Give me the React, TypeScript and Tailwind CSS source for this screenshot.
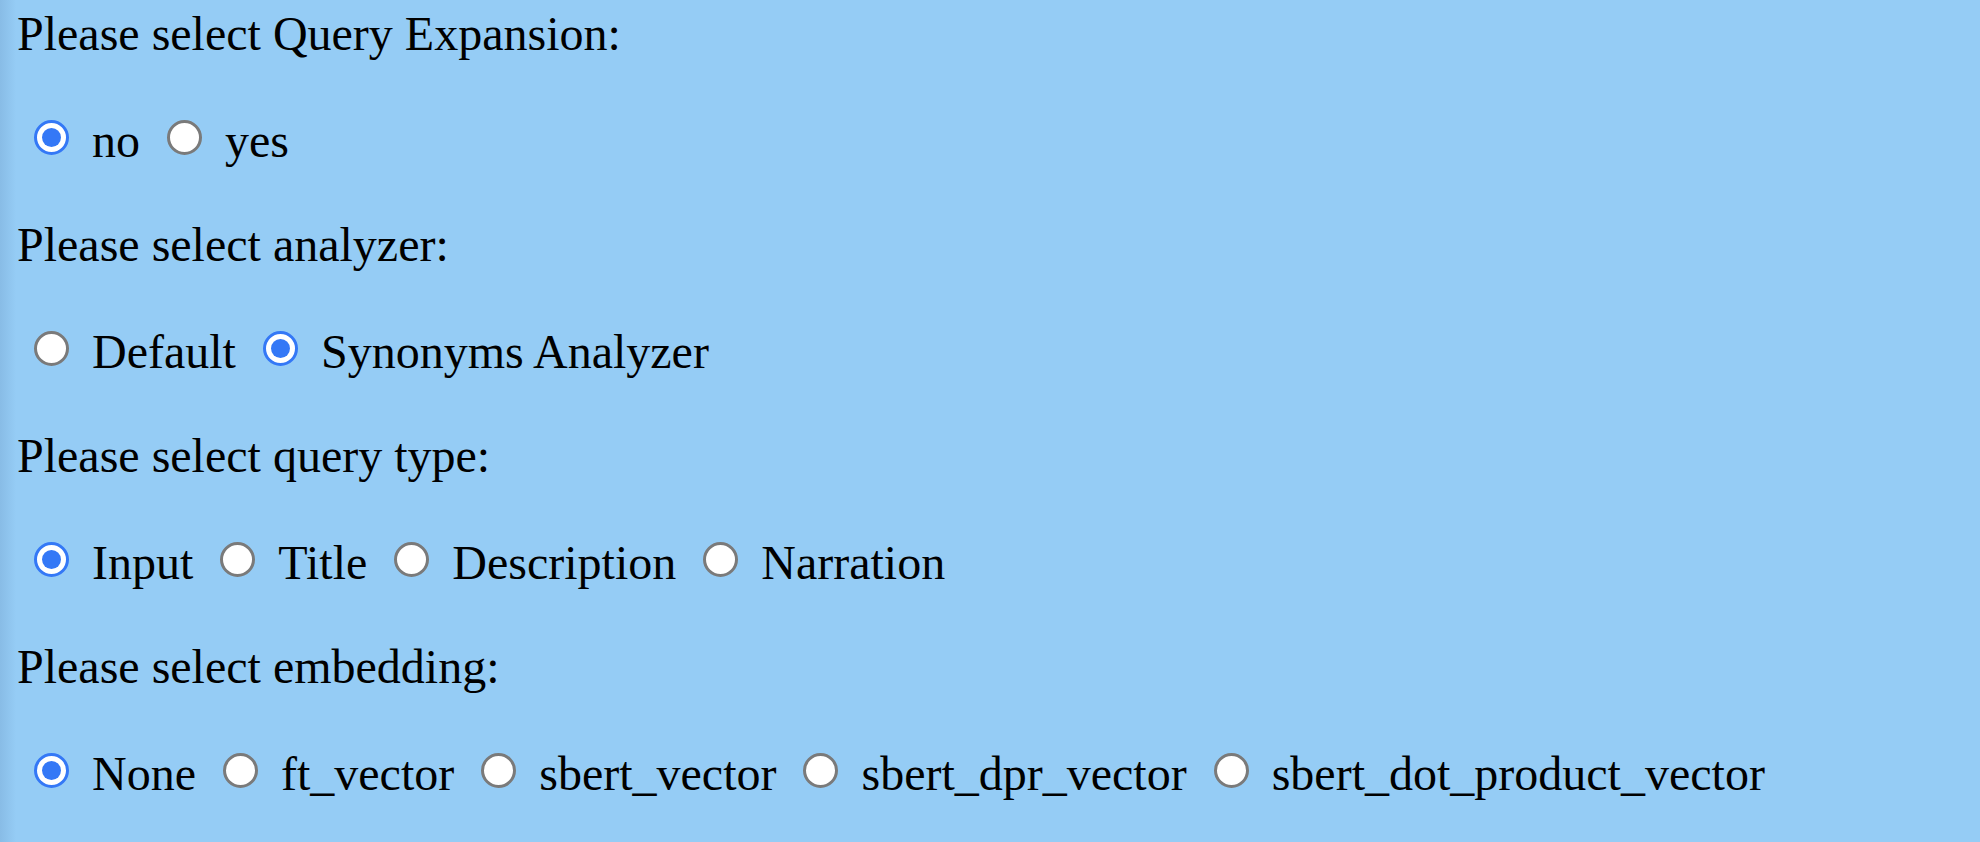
import React from "react";

type Opt = { label: string; checked?: boolean };

const sections: { title: string; options: Opt[] }[] = [
  { title: "Please select Query Expansion:", options: [{ label: "no", checked: true }, { label: "yes" }] },
  { title: "Please select analyzer:", options: [{ label: "Default" }, { label: "Synonyms Analyzer", checked: true }] },
  {
    title: "Please select query type:",
    options: [{ label: "Input", checked: true }, { label: "Title" }, { label: "Description" }, { label: "Narration" }],
  },
  {
    title: "Please select embedding:",
    options: [
      { label: "None", checked: true },
      { label: "ft_vector" },
      { label: "sbert_vector" },
      { label: "sbert_dpr_vector" },
      { label: "sbert_dot_product_vector" },
    ],
  },
];

function Radio({ checked, first }: { checked?: boolean; first: boolean }) {
  return (
    <span
      className={
        "mt-[7px] mr-[23px] flex h-[35px] w-[35px] shrink-0 items-center justify-center rounded-full border-[3px] bg-white " +
        (first ? "ml-[17px] " : "ml-[27px] ") +
        (checked ? "border-[#3478f6]" : "border-[#7a7a7a]")
      }
    >
      {checked && <span className="h-[19px] w-[19px] rounded-full bg-[#3478f6]" />}
    </span>
  );
}

export default function App() {
  return (
    <div
      className="min-h-screen w-full bg-[#95ccf5] bg-[linear-gradient(to_right,#88bce6_0px,#95ccf5_16px)] pl-[17px] pt-[6px] text-[48px] text-black"
      style={{ fontFamily: '"Liberation Serif", "Times New Roman", serif' }}
    >
      {sections.map((s, i) => (
        <div key={i} className={i === 0 ? "" : "mt-[49px]"}>
          <div className="h-[55px] leading-[55px] whitespace-nowrap">{s.title}</div>
          <div className="mt-[52px] flex h-[55px] items-start">
            {s.options.map((o, j) => (
              <React.Fragment key={j}>
                <Radio checked={o.checked} first={j === 0} />
                <span className="leading-[55px] whitespace-nowrap">{o.label}</span>
              </React.Fragment>
            ))}
          </div>
        </div>
      ))}
    </div>
  );
}
